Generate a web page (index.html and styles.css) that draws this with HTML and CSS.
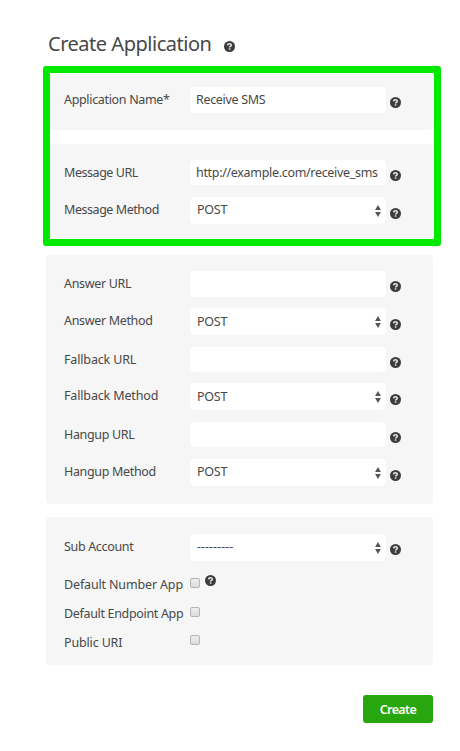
FILE: index.html
```
<!DOCTYPE html>
<html lang="en">
<head>
<meta charset="utf-8">
<title>Create Application</title>
<link rel="stylesheet" href="styles.css">
</head>
<body>
<svg class="defs" aria-hidden="true">
  <symbol id="help" viewBox="0 0 11 11">
    <circle cx="5.5" cy="5.5" r="5.5" fill="#3c3c3c"/>
    <path d="M3.6 4.4C3.7 2.3 7.3 2.3 7.3 4.2C7.3 5.4 5.6 5.3 5.6 6.5" fill="none" stroke="#e8e8e8" stroke-width="1.5"/>
    <rect x="4.8" y="7.3" width="1.6" height="1.4" fill="#e8e8e8"/>
  </symbol>
  <symbol id="arrows" viewBox="0 0 6 12">
    <path d="M3 0L5.9 4.9H.1ZM3 12L.1 7.1H5.9Z" fill="#555"/>
  </symbol>
</svg>
<form class="page">
  <h1 class="title"><span class="title-text">Create Application</span><svg class="help"><use href="#help"/></svg></h1>

  <section class="panel panel-name">
    <div class="row"><label class="label">Application Name*</label><div class="field"><input class="control" type="text" value="Receive SMS"></div><svg class="help"><use href="#help"/></svg></div>
  </section>

  <section class="panel panel-message">
    <div class="row"><label class="label tight">Message URL</label><div class="field short"><input class="control url" type="text" value="http://example.com/receive_sms"></div><svg class="help"><use href="#help"/></svg></div>
    <div class="row select"><label class="label tight">Message Method</label><div class="field"><span class="value">POST</span><svg class="arrows"><use href="#arrows"/></svg></div><svg class="help"><use href="#help"/></svg></div>
  </section>

  <section class="panel panel-calls">
    <div class="row"><label class="label">Answer URL</label><div class="field"><input class="control" type="text"></div><svg class="help"><use href="#help"/></svg></div>
    <div class="row select low"><label class="label">Answer Method</label><div class="field"><span class="value">POST</span><svg class="arrows"><use href="#arrows"/></svg></div><svg class="help"><use href="#help"/></svg></div>
    <div class="row"><label class="label wide">Fallback URL</label><div class="field short"><input class="control" type="text"></div><svg class="help"><use href="#help"/></svg></div>
    <div class="row select low"><label class="label wide">Fallback Method</label><div class="field"><span class="value">POST</span><svg class="arrows"><use href="#arrows"/></svg></div><svg class="help"><use href="#help"/></svg></div>
    <div class="row"><label class="label">Hangup URL</label><div class="field short"><input class="control" type="text"></div><svg class="help"><use href="#help"/></svg></div>
    <div class="row select"><label class="label">Hangup Method</label><div class="field"><span class="value">POST</span><svg class="arrows"><use href="#arrows"/></svg></div><svg class="help"><use href="#help"/></svg></div>
  </section>

  <section class="panel panel-account">
    <div class="row select account"><label class="label">Sub Account</label><div class="field"><span class="value dashes">---------</span><svg class="arrows"><use href="#arrows"/></svg></div><svg class="help"><use href="#help"/></svg></div>
    <div class="row check"><label class="label wide">Default Number App</label><div class="options"><input class="box" type="checkbox"><svg class="help"><use href="#help"/></svg></div></div>
    <div class="row check"><label class="label">Default Endpoint App</label><div class="options"><input class="box" type="checkbox"></div></div>
    <div class="row check last"><label class="label wide">Public URI</label><div class="options"><input class="box" type="checkbox"></div></div>
  </section>

  <button class="create" type="button">Create</button>
  <div class="highlight"></div>
</form>
</body>
</html>
```

FILE: styles.css
```
* { box-sizing: border-box; }
body {
  margin: 0;
  background: #fff;
  color: #484848;
  font: 12.5px/26px "Noto Sans", sans-serif;
}
.defs { display: none; }
.page {
  position: relative;
  display: flex;
  flex-direction: column;
  height: 751px;
  padding: 30px 27px 0 46px;
}
.title {
  display: flex;
  height: 43px;
  margin: 0;
  padding-left: 2px;
  font-size: 20px;
  font-weight: 400;
  line-height: 28px;
}
.title-text { width: 176px; letter-spacing: -0.48px; white-space: nowrap; }
.title .help { margin-top: 11px; }
.help { width: 11px; height: 11px; margin-top: 10px; }
.panel {
  display: grid;
  align-content: start;
  padding-left: 18px;
  border-radius: 4px;
  background: #f6f6f6;
}
.panel-name { height: 57px; padding-top: 14px; margin-bottom: 14px; }
.panel-message { height: 97px; padding-top: 16px; margin-bottom: 14px; grid-template-rows: 37px 27px; }
.panel-calls { height: 249px; padding-top: 16px; margin-bottom: 13px; grid-template-rows: 37px 39px 36px 39px 37px 27px; }
.panel-account { height: 148px; padding-top: 17px; grid-template-rows: 38px 29px 29px 27px; }
.row {
  display: grid;
  grid-template-columns: 126px 196px 16px;
  align-items: start;
}
.row > .help { margin-left: 4px; }
.label { letter-spacing: -0.33px; white-space: nowrap; }
.label.tight { letter-spacing: -0.45px; }
.label.wide { letter-spacing: -0.15px; }
.field {
  display: flex;
  height: 26px;
  border-radius: 5px;
  background: #fff;
}
.field.short { height: 25px; }
.control {
  width: 100%;
  height: 26px;
  padding: 0 6px;
  border: 0;
  outline: 0;
  background: transparent;
  color: inherit;
  font: inherit;
  letter-spacing: -0.32px;
}
.select .field { height: 27px; justify-content: space-between; padding: 0 5px 0 7px; }
.select > .help { margin-top: 11px; }
.account > .help { margin-top: 10px; }
.value { letter-spacing: -0.25px; }
.low .value { padding-top: 1px; }
.value.dashes { letter-spacing: 0; }
.arrows { width: 6px; height: 12px; margin-top: 7.5px; }
.options { display: flex; gap: 5px; }
.box {
  appearance: none;
  width: 10px;
  height: 10px;
  margin: 6px 0 0;
  border: 1px solid #b4b4b4;
  border-radius: 2px;
  background: linear-gradient(#eee, #dcdcdc);
}
.options .help { margin-top: 3px; }
.last .box { margin-top: 5px; }
.create {
  align-self: flex-end;
  width: 70px;
  height: 28px;
  margin-top: 30px;
  padding: 1px 0 0;
  border: 0;
  border-radius: 3px;
  background: #27a60d;
  color: #fff;
  font: 600 12.5px/27px "Noto Sans", sans-serif;
  letter-spacing: -0.6px;
}
.highlight {
  position: absolute;
  top: 66px;
  left: 43px;
  width: 398px;
  height: 180px;
  border: 7px solid #00e900;
  border-radius: 3px;
  pointer-events: none;
}
```
